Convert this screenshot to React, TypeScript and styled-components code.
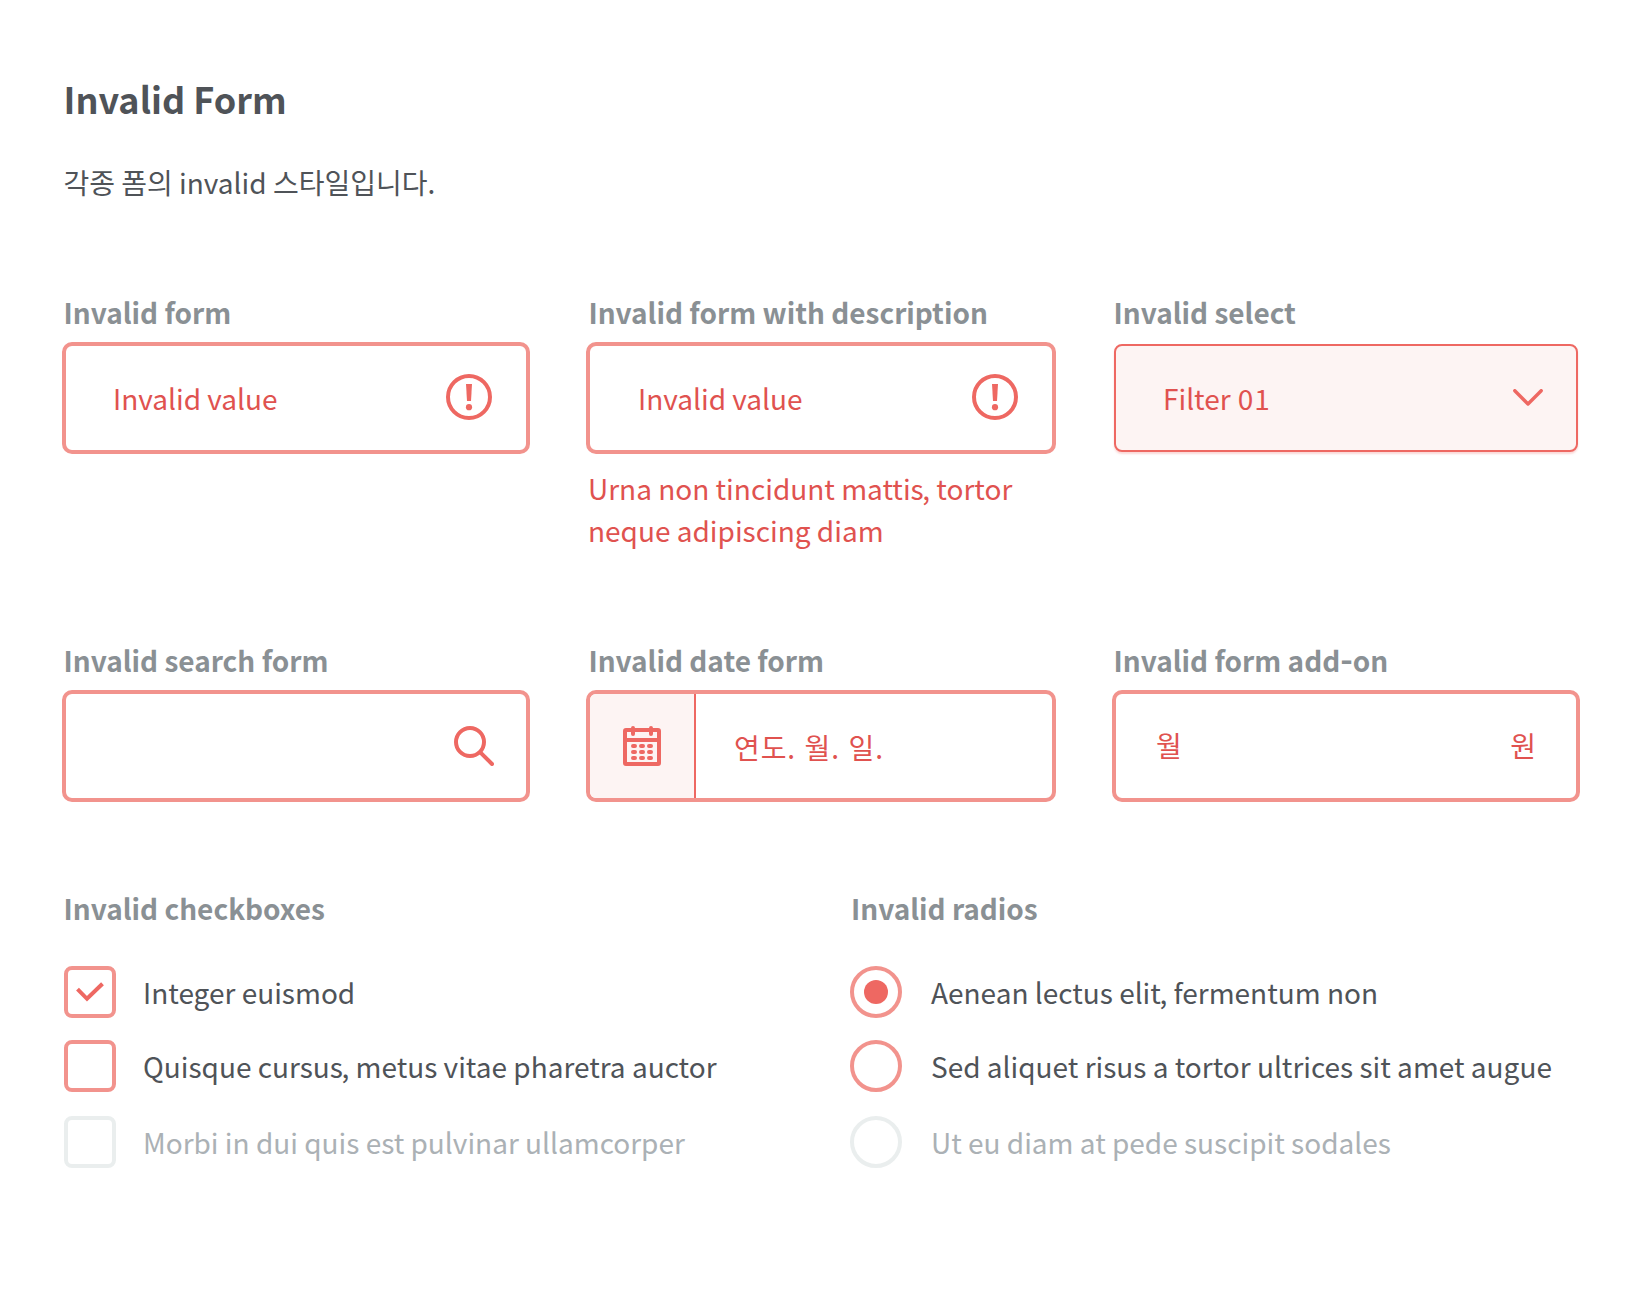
import React from 'react';
import styled, { createGlobalStyle, css } from 'styled-components';

const color = {
  text: '#4f5358',
  label: '#8a9094',
  muted: '#abb1b5',
  disabled: '#eaeeee',
  danger: '#e0524f',
  dangerIcon: '#ee6862',
  dangerSoft: '#f2938d',
  dangerBg: '#fdf4f3',
};

const GlobalStyle = createGlobalStyle`
  *, *::before, *::after { box-sizing: border-box; }
  body { margin: 0; background: #fff; }
`;

const Page = styled.main`
  width: 1644px;
  min-height: 1290px;
  padding: 72px 62px 0;
  font-family: 'Noto Sans CJK KR', 'Noto Sans', sans-serif;
  font-size: 28px;
  line-height: 42px;
  color: ${color.text};
  background: #fff;
`;

const Header = styled.header`
  padding-left: 1.5px;
`;

const Title = styled.h1`
  margin: 0;
  font-size: 36px;
  line-height: 52px;
  font-weight: 700;
`;

const Lead = styled.p`
  margin: 37px 0 0;
`;

const FieldRow = styled.section`
  display: grid;
  grid-template-columns: 468px 470px 468px;
  column-gap: 56px;
  margin-top: 88px;
`;

const Field = styled.div`
  display: flex;
  flex-direction: column;
`;

const Label = styled.span<{ $inset?: number }>`
  display: block;
  height: 42px;
  margin-left: ${(p) => p.$inset ?? 1.5}px;
  margin-bottom: 9px;
  font-weight: 700;
  color: ${color.label};
  white-space: nowrap;
`;

const Control = styled.div<{ $left?: number; $right?: number }>`
  display: flex;
  align-items: center;
  justify-content: space-between;
  height: 112px;
  padding-left: ${(p) => p.$left ?? 47}px;
  padding-right: ${(p) => p.$right ?? 34}px;
  border: 4px solid ${color.dangerSoft};
  border-radius: 10px;
  overflow: hidden;
  color: ${color.danger};
`;

const SelectControl = styled(Control)`
  height: 108px;
  margin: 2px;
  border: 2px solid ${color.dangerIcon};
  border-radius: 8px;
  background: ${color.dangerBg};
  box-shadow: 0 2px 2px rgba(238, 104, 98, 0.25);
`;

const DateAddon = styled.div`
  display: flex;
  align-items: center;
  justify-content: center;
  width: 106px;
  height: 100%;
  border-right: 2px solid ${color.dangerIcon};
  background: ${color.dangerBg};
`;

const DateText = styled.span`
  flex: 1;
  padding: 2px 0 0 38px;
  white-space: pre;
  letter-spacing: 0.9px;
  word-spacing: 1.4px;
`;

const Unit = styled.span`
  padding-bottom: 2px;
`;

const Description = styled.p`
  margin: 13px 0 0;
  padding-left: 2px;
  color: ${color.danger};
`;

const ChoiceRow = styled.section`
  display: grid;
  grid-template-columns: 786px 1fr;
  margin-top: 85px;
  padding-left: 2px;
`;

const ChoiceGroup = styled.div`
  display: flex;
  flex-direction: column;
`;

const GroupLabel = styled(Label)`
  margin-bottom: 37px;
`;

const Choice = styled.label<{ $disabled?: boolean; $gap?: number; $inset?: number }>`
  display: flex;
  align-items: center;
  gap: ${(p) => p.$inset ?? 27}px;
  height: 52px;
  margin-bottom: ${(p) => p.$gap ?? 22}px;
  line-height: 52px;
  white-space: nowrap;
  color: ${(p) => (p.$disabled ? color.muted : color.text)};
`;

const mark = css<{ $disabled?: boolean }>`
  display: flex;
  align-items: center;
  justify-content: center;
  width: 52px;
  height: 52px;
  flex: none;
  border: 4px solid ${(p) => (p.$disabled ? color.disabled : color.dangerSoft)};
`;

const Box = styled.span`
  ${mark}
  border-radius: 8px;
`;

const Circle = styled.span`
  ${mark}
  border-radius: 50%;
`;

const Dot = styled.span`
  width: 24px;
  height: 24px;
  border-radius: 50%;
  background: ${color.dangerIcon};
`;

const Digits = styled.span`
  margin-left: 0.8px;
  letter-spacing: 1px;
`;

const Comma = styled.span`
  margin-left: -1.5px;
`;

const Hyphen = styled.span`
  font-size: 34px;
  line-height: 0;
`;

const Icon = styled.svg<{ $lift?: number }>`
  display: block;
  flex: none;
  margin-bottom: ${(p) => p.$lift ?? 0}px;
`;

/** Text whose commas are set tight to the preceding word. */
const Copy = ({ children }: { children: string }) => {
  const parts = children.split(',');
  return (
    <span>
      {parts.map((part, i) => (
        <React.Fragment key={i}>
          {part}
          {i < parts.length - 1 && <Comma>,</Comma>}
        </React.Fragment>
      ))}
    </span>
  );
};

const AlertIcon = () => (
  <Icon $lift={2} width="46" height="46" viewBox="0 0 46 46" fill={color.dangerIcon}>
    <circle cx="23" cy="23" r="21" fill="none" stroke={color.dangerIcon} strokeWidth="4" />
    <path d="M20 10h6l-1 17h-4z" />
    <circle cx="23" cy="33.2" r="3.1" />
  </Icon>
);

const ChevronIcon = () => (
  <Icon $lift={1} width="30" height="17" viewBox="0 0 30 17" fill="none" stroke={color.dangerIcon} strokeWidth="3.4" strokeLinecap="round" strokeLinejoin="round">
    <path d="M1.8 1.7L15 15L28.2 1.7" />
  </Icon>
);

const SearchIcon = () => (
  <Icon width="40" height="40" viewBox="0 0 40 40" fill="none" stroke={color.dangerIcon} strokeWidth="4">
    <circle cx="16" cy="16" r="14" />
    <path d="M26.3 26.3L38 38" strokeLinecap="round" />
  </Icon>
);

const CalendarIcon = () => (
  <Icon width="38" height="40" viewBox="0 0 38 40" fill="none" stroke={color.dangerIcon} strokeWidth="4">
    <rect x="2" y="4" width="34" height="34" rx="1" />
    <path d="M2 14h34" />
    <path d="M10 2v6M28 2v6" strokeLinecap="round" />
    {[20, 26, 32].map((y) => (
      <path key={y} d={`M10 ${y}h2M18 ${y}h2M26 ${y}h2`} strokeLinecap="round" />
    ))}
  </Icon>
);

const CheckIcon = () => (
  <Icon width="28" height="20" viewBox="0 0 28 20" fill="none" stroke={color.dangerIcon} strokeWidth="4">
    <path d="M1.5 7.2L11 16.8L26.5 1.8" />
  </Icon>
);

const checkboxes = [
  { text: 'Integer euismod', checked: true },
  { text: 'Quisque cursus, metus vitae pharetra auctor', gap: 24 },
  { text: 'Morbi in dui quis est pulvinar ullamcorper', disabled: true },
];

const radios = [
  { text: 'Aenean lectus elit, fermentum non', checked: true },
  { text: 'Sed aliquet risus a tortor ultrices sit amet augue', gap: 24 },
  { text: 'Ut eu diam at pede suscipit sodales', disabled: true },
];

export default function App() {
  return (
    <Page>
      <GlobalStyle />
      <Header>
        <Title>Invalid Form</Title>
        <Lead>각종 폼의 invalid 스타일입니다.</Lead>
      </Header>

      <FieldRow>
        <Field>
          <Label>Invalid form</Label>
          <Control>
            <Copy>Invalid value</Copy>
            <AlertIcon />
          </Control>
        </Field>
        <Field>
          <Label $inset={2.4}>Invalid form with description</Label>
          <Control $left={48}>
            <Copy>Invalid value</Copy>
            <AlertIcon />
          </Control>
          <Description>
            <Copy>Urna non tincidunt mattis, tortor</Copy>
            <br />
            neque adipiscing diam
          </Description>
        </Field>
        <Field>
          <Label>Invalid select</Label>
          <SelectControl $left={47} $right={33}>
            <span>
              Filter <Digits>01</Digits>
            </span>
            <ChevronIcon />
          </SelectControl>
        </Field>
      </FieldRow>

      <FieldRow>
        <Field>
          <Label>Invalid search form</Label>
          <Control $right={32}>
            <span />
            <SearchIcon />
          </Control>
        </Field>
        <Field>
          <Label $inset={2.4}>Invalid date form</Label>
          <Control $left={0} $right={0}>
            <DateAddon>
              <CalendarIcon />
            </DateAddon>
            <DateText>연도. 월. 일.</DateText>
          </Control>
        </Field>
        <Field>
          <Label>
            Invalid form add<Hyphen>-</Hyphen>on
          </Label>
          <Control $left={40} $right={40}>
            <Unit>월</Unit>
            <Unit>원</Unit>
          </Control>
        </Field>
      </FieldRow>

      <ChoiceRow>
        <ChoiceGroup>
          <GroupLabel $inset={-0.5}>Invalid checkboxes</GroupLabel>
          {checkboxes.map((c) => (
            <Choice key={c.text} $disabled={c.disabled} $gap={c.gap}>
              <Box $disabled={c.disabled}>{c.checked && <CheckIcon />}</Box>
              <Copy>{c.text}</Copy>
            </Choice>
          ))}
        </ChoiceGroup>
        <ChoiceGroup>
          <GroupLabel $inset={1}>Invalid radios</GroupLabel>
          {radios.map((r) => (
            <Choice key={r.text} $disabled={r.disabled} $gap={r.gap} $inset={29}>
              <Circle $disabled={r.disabled}>{r.checked && <Dot />}</Circle>
              <Copy>{r.text}</Copy>
            </Choice>
          ))}
        </ChoiceGroup>
      </ChoiceRow>
    </Page>
  );
}
